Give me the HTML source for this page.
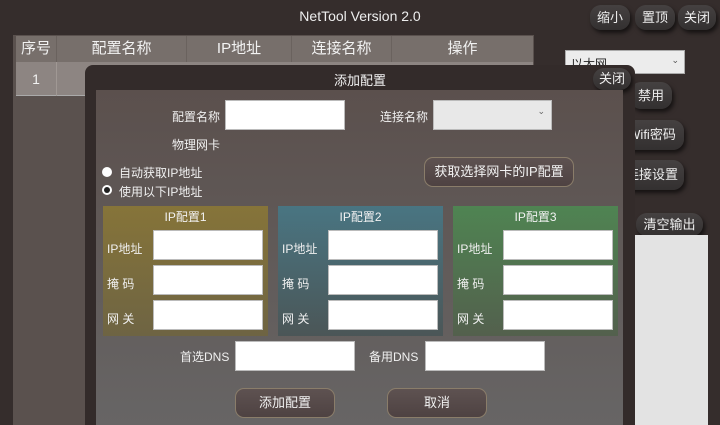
<!DOCTYPE html>
<html><head><meta charset="utf-8"><style>
*{box-sizing:border-box;margin:0;padding:0}
body{width:720px;height:425px;overflow:hidden;background:#352d2c;font-family:"Liberation Sans","Noto Sans CJK SC",sans-serif;color:#f2f2f2;font-size:13px;position:relative}
.a{position:absolute}
.btn{position:absolute;background:linear-gradient(#454141,#333030);border-radius:11px;box-shadow:2px 3px 4px rgba(0,0,0,.6);color:#eee;text-align:center;font-size:13px}
.in{position:absolute;background:#fff;border:1px solid #bbb}
.lbl{position:absolute;font-size:12px;color:#f0f0f0}
.grp{position:absolute;top:206px;width:165px;height:130px}
.grp .t{position:absolute;top:2px;width:100%;text-align:center;font-size:12px}
.h{position:absolute;top:0;height:26px;text-align:center;border-left:1px solid #6a625e}
</style></head><body>
<div class="a" style="left:0;top:8px;width:720px;text-align:center;font-size:14px;color:#eee">NetTool Version 2.0</div>
<div class="btn" style="left:590px;top:5px;width:40px;height:25px;line-height:25px">缩小</div>
<div class="btn" style="left:635px;top:5px;width:40px;height:25px;line-height:25px">置顶</div>
<div class="btn" style="left:678px;top:5px;width:38px;height:25px;line-height:25px">关闭</div>
<!-- table -->
<div class="a" style="left:13px;top:35px;width:521px;height:390px;background:#5a514e"></div>
<div class="a" style="left:16px;top:36px;width:517px;height:26px;background:#776f6b;font-size:15px;line-height:26px">
<span class="a" style="left:0;width:40px;text-align:center">序号</span>
<span class="h" style="left:40px;width:130px">配置名称</span>
<span class="h" style="left:170px;width:105px">IP地址</span>
<span class="h" style="left:275px;width:100px">连接名称</span>
<span class="h" style="left:375px;width:142px">操作</span>
</div>
<div class="a" style="left:16px;top:62px;width:517px;height:34px;background:#8d8582;border-bottom:1px solid #aaa"><span class="a" style="left:0;width:40px;text-align:center;top:9px;font-size:14px">1</span><span class="a" style="left:40px;top:0;height:34px;border-left:1px solid #a09894"></span></div>
<!-- right -->
<div class="a" style="left:565px;top:50px;width:120px;height:24px;background:#ececec;border:1px solid #aaa;color:#222;font-size:12px;padding:4px 5px">以太网<span style="float:right;font-size:9px;color:#555">⌄</span></div>
<div class="btn" style="left:630px;top:82px;width:42px;height:27px;line-height:27px">禁用</div>
<div class="btn" style="left:620px;top:120px;width:64px;height:30px;line-height:30px">Wifi密码</div>
<div class="btn" style="left:620px;top:160px;width:64px;height:30px;line-height:30px">连接设置</div>
<div class="btn" style="left:636px;top:213px;width:67px;height:23px;line-height:23px">清空输出</div>
<div class="a" style="left:635px;top:235px;width:73px;height:190px;background:#e3e3e3"></div>
<!-- dialog -->
<div class="a" style="left:85px;top:65px;width:550px;height:360px;background:#332b2a;border-radius:8px 8px 0 0"></div>
<div class="a" style="left:85px;top:70px;width:550px;text-align:center;font-size:13px">添加配置</div>
<div class="btn" style="left:593px;top:68px;width:38px;height:22px;line-height:22px">关闭</div>
<div class="a" style="left:96px;top:90px;width:527px;height:335px;background:linear-gradient(#5b504d,#676565)"></div>
<div class="lbl" style="left:172px;top:108px">配置名称</div>
<div class="in" style="left:225px;top:100px;width:120px;height:30px"></div>
<div class="lbl" style="left:380px;top:108px">连接名称</div>
<div class="a" style="left:433px;top:100px;width:119px;height:30px;background:#e8e8e8;border:1px solid #bbb"><span class="a" style="right:6px;top:5px;font-size:9px;color:#666">⌄</span></div>
<div class="lbl" style="left:172px;top:136px">物理网卡</div>
<div class="a" style="left:102px;top:167px;width:10px;height:10px;border-radius:50%;background:#fff"></div>
<div class="lbl" style="left:119px;top:164px">自动获取IP地址</div>
<div class="a" style="left:102px;top:185px;width:10px;height:10px;border-radius:50%;background:#fff;border:2px solid #fff"><div style="width:6px;height:6px;border-radius:50%;background:#222"></div></div>
<div class="lbl" style="left:119px;top:183px">使用以下IP地址</div>
<div class="a" style="left:424px;top:157px;width:150px;height:30px;border-radius:9px;border:1px solid #8a7d6a;background:linear-gradient(#5e5251,#4e4242);text-align:center;line-height:28px;font-size:13px">获取选择网卡的IP配置</div>
<div class="grp" style="left:103px;background:linear-gradient(#867439,#6e6443)"><div class="t">IP配置1</div></div>
<div class="grp" style="left:278px;background:linear-gradient(#497582,#4b5657)"><div class="t">IP配置2</div></div>
<div class="grp" style="left:453px;background:linear-gradient(#4f8452,#53604d)"><div class="t">IP配置3</div></div>
<div class="lbl" style="left:180px;top:348px">首选DNS</div>
<div class="in" style="left:235px;top:341px;width:120px;height:30px"></div>
<div class="lbl" style="left:369px;top:348px">备用DNS</div>
<div class="in" style="left:425px;top:341px;width:120px;height:30px"></div>
<div class="a" style="left:235px;top:388px;width:100px;height:30px;border-radius:9px;border:1px solid #8a7d6a;background:linear-gradient(#5e5251,#4e4242);text-align:center;line-height:28px">添加配置</div>
<div class="a" style="left:387px;top:388px;width:100px;height:30px;border-radius:9px;border:1px solid #8a7d6a;background:linear-gradient(#5e5251,#4e4242);text-align:center;line-height:28px">取消</div>

<div class="lbl" style="left:107px;top:240px">IP地址</div><div class="in" style="left:153px;top:230px;width:110px;height:30px"></div>
<div class="lbl" style="left:107px;top:275px">掩 码</div><div class="in" style="left:153px;top:265px;width:110px;height:30px"></div>
<div class="lbl" style="left:107px;top:310px">网 关</div><div class="in" style="left:153px;top:300px;width:110px;height:30px"></div>
<div class="lbl" style="left:282px;top:240px">IP地址</div><div class="in" style="left:328px;top:230px;width:110px;height:30px"></div>
<div class="lbl" style="left:282px;top:275px">掩 码</div><div class="in" style="left:328px;top:265px;width:110px;height:30px"></div>
<div class="lbl" style="left:282px;top:310px">网 关</div><div class="in" style="left:328px;top:300px;width:110px;height:30px"></div>
<div class="lbl" style="left:457px;top:240px">IP地址</div><div class="in" style="left:503px;top:230px;width:110px;height:30px"></div>
<div class="lbl" style="left:457px;top:275px">掩 码</div><div class="in" style="left:503px;top:265px;width:110px;height:30px"></div>
<div class="lbl" style="left:457px;top:310px">网 关</div><div class="in" style="left:503px;top:300px;width:110px;height:30px"></div>
</body></html>
